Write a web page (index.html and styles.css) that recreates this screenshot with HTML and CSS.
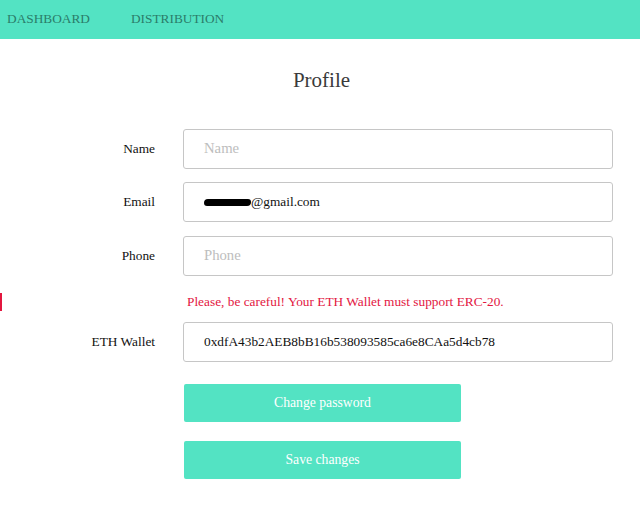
FILE: index.html
```html
<!DOCTYPE html>
<html>
<head>
<meta charset="utf-8">
<title>Profile</title>
<link rel="stylesheet" href="styles.css">
</head>
<body>
<nav class="topnav">
  <a class="nav-link" href="#">DASHBOARD</a>
  <a class="nav-link" href="#">DISTRIBUTION</a>
</nav>
<main class="profile">
  <h1 class="title">Profile</h1>
  <form class="form">
    <div class="row">
      <label class="label">Name</label>
      <input class="field" type="text" placeholder="Name">
    </div>
    <div class="row row-email">
      <label class="label">Email</label>
      <div class="field field-static"><span class="redact"></span>@gmail.com</div>
    </div>
    <div class="row row-phone">
      <label class="label">Phone</label>
      <input class="field" type="text" placeholder="Phone">
    </div>
    <div class="warn">Please, be careful! Your ETH Wallet must support ERC-20.</div>
    <div class="row row-eth">
      <label class="label">ETH Wallet</label>
      <input class="field" type="text" value="0xdfA43b2AEB8bB16b538093585ca6e8CAa5d4cb78">
    </div>
    <div class="row row-btn">
      <span class="label"></span>
      <button class="btn" type="button">Change password</button>
    </div>
    <div class="row row-btn2">
      <span class="label"></span>
      <button class="btn" type="button">Save changes</button>
    </div>
  </form>
</main>
</body>
</html>
```
FILE: styles.css
```css
html, body {
  margin: 0;
  padding: 0;
  background: #ffffff;
}

body {
  font-family: "Liberation Serif", "Times New Roman", serif;
  font-size: 13.33px;
  color: #111111;
}

.topnav {
  display: flex;
  height: 39px;
  box-sizing: border-box;
  padding: 11px 0 0 7px;
  gap: 41px;
  background: #53e3c3;
}

.nav-link {
  font-size: 13.33px;
  line-height: 15px;
  color: #2b7d6a;
  text-decoration: none;
}

.profile {
  display: flex;
  flex-direction: column;
}

.title {
  margin: 29px 0 0 3px;
  font-size: 21px;
  line-height: 24px;
  font-weight: normal;
  text-align: center;
  color: #3a3a3a;
}

.form {
  display: flex;
  flex-direction: column;
  margin-top: 37px;
}

.row {
  display: flex;
  align-items: center;
  gap: 28px;
}

.row.row-email {
  margin-top: 13px;
}

.row.row-phone {
  margin-top: 14px;
}

.label {
  width: 155px;
  flex: none;
  text-align: right;
  font-family: "Liberation Serif", "Times New Roman", serif;
  color: #111111;
}

.field {
  box-sizing: border-box;
  width: 430px;
  height: 40px;
  margin: 0;
  padding: 0 0 0 20px;
  border: 1px solid #c6c6c6;
  border-radius: 3px;
  font-family: "Liberation Serif", "Times New Roman", serif;
  font-size: 13.33px;
  color: #111111;
  background: #ffffff;
  outline: none;
}

.field::placeholder {
  color: #bdbdbd;
  font-size: 14.7px;
}

.field-static {
  display: flex;
  align-items: center;
}

.redact {
  display: inline-block;
  width: 47px;
  height: 7px;
  margin-top: 1px;
  background: #000000;
  border-radius: 4px 3px 4px 3px;
}

.warn {
  margin-top: 17px;
  height: 18px;
  line-height: 18px;
  border-left: 2px solid #e3163f;
  padding-left: 185px;
  font-family: "Liberation Serif", "Times New Roman", serif;
  color: #e3163f;
}

.row.row-eth {
  margin-top: 11px;
}

.row.row-btn {
  margin-top: 22px;
}

.row.row-btn2 {
  margin-top: 19px;
}

.btn {
  width: 277px;
  height: 38px;
  margin-left: 1px;
  border: none;
  border-radius: 2px;
  background: #53e3c3;
  color: #ffffff;
  font-family: "Liberation Serif", "Times New Roman", serif;
  font-size: 13.7px;
  cursor: pointer;
}
```
